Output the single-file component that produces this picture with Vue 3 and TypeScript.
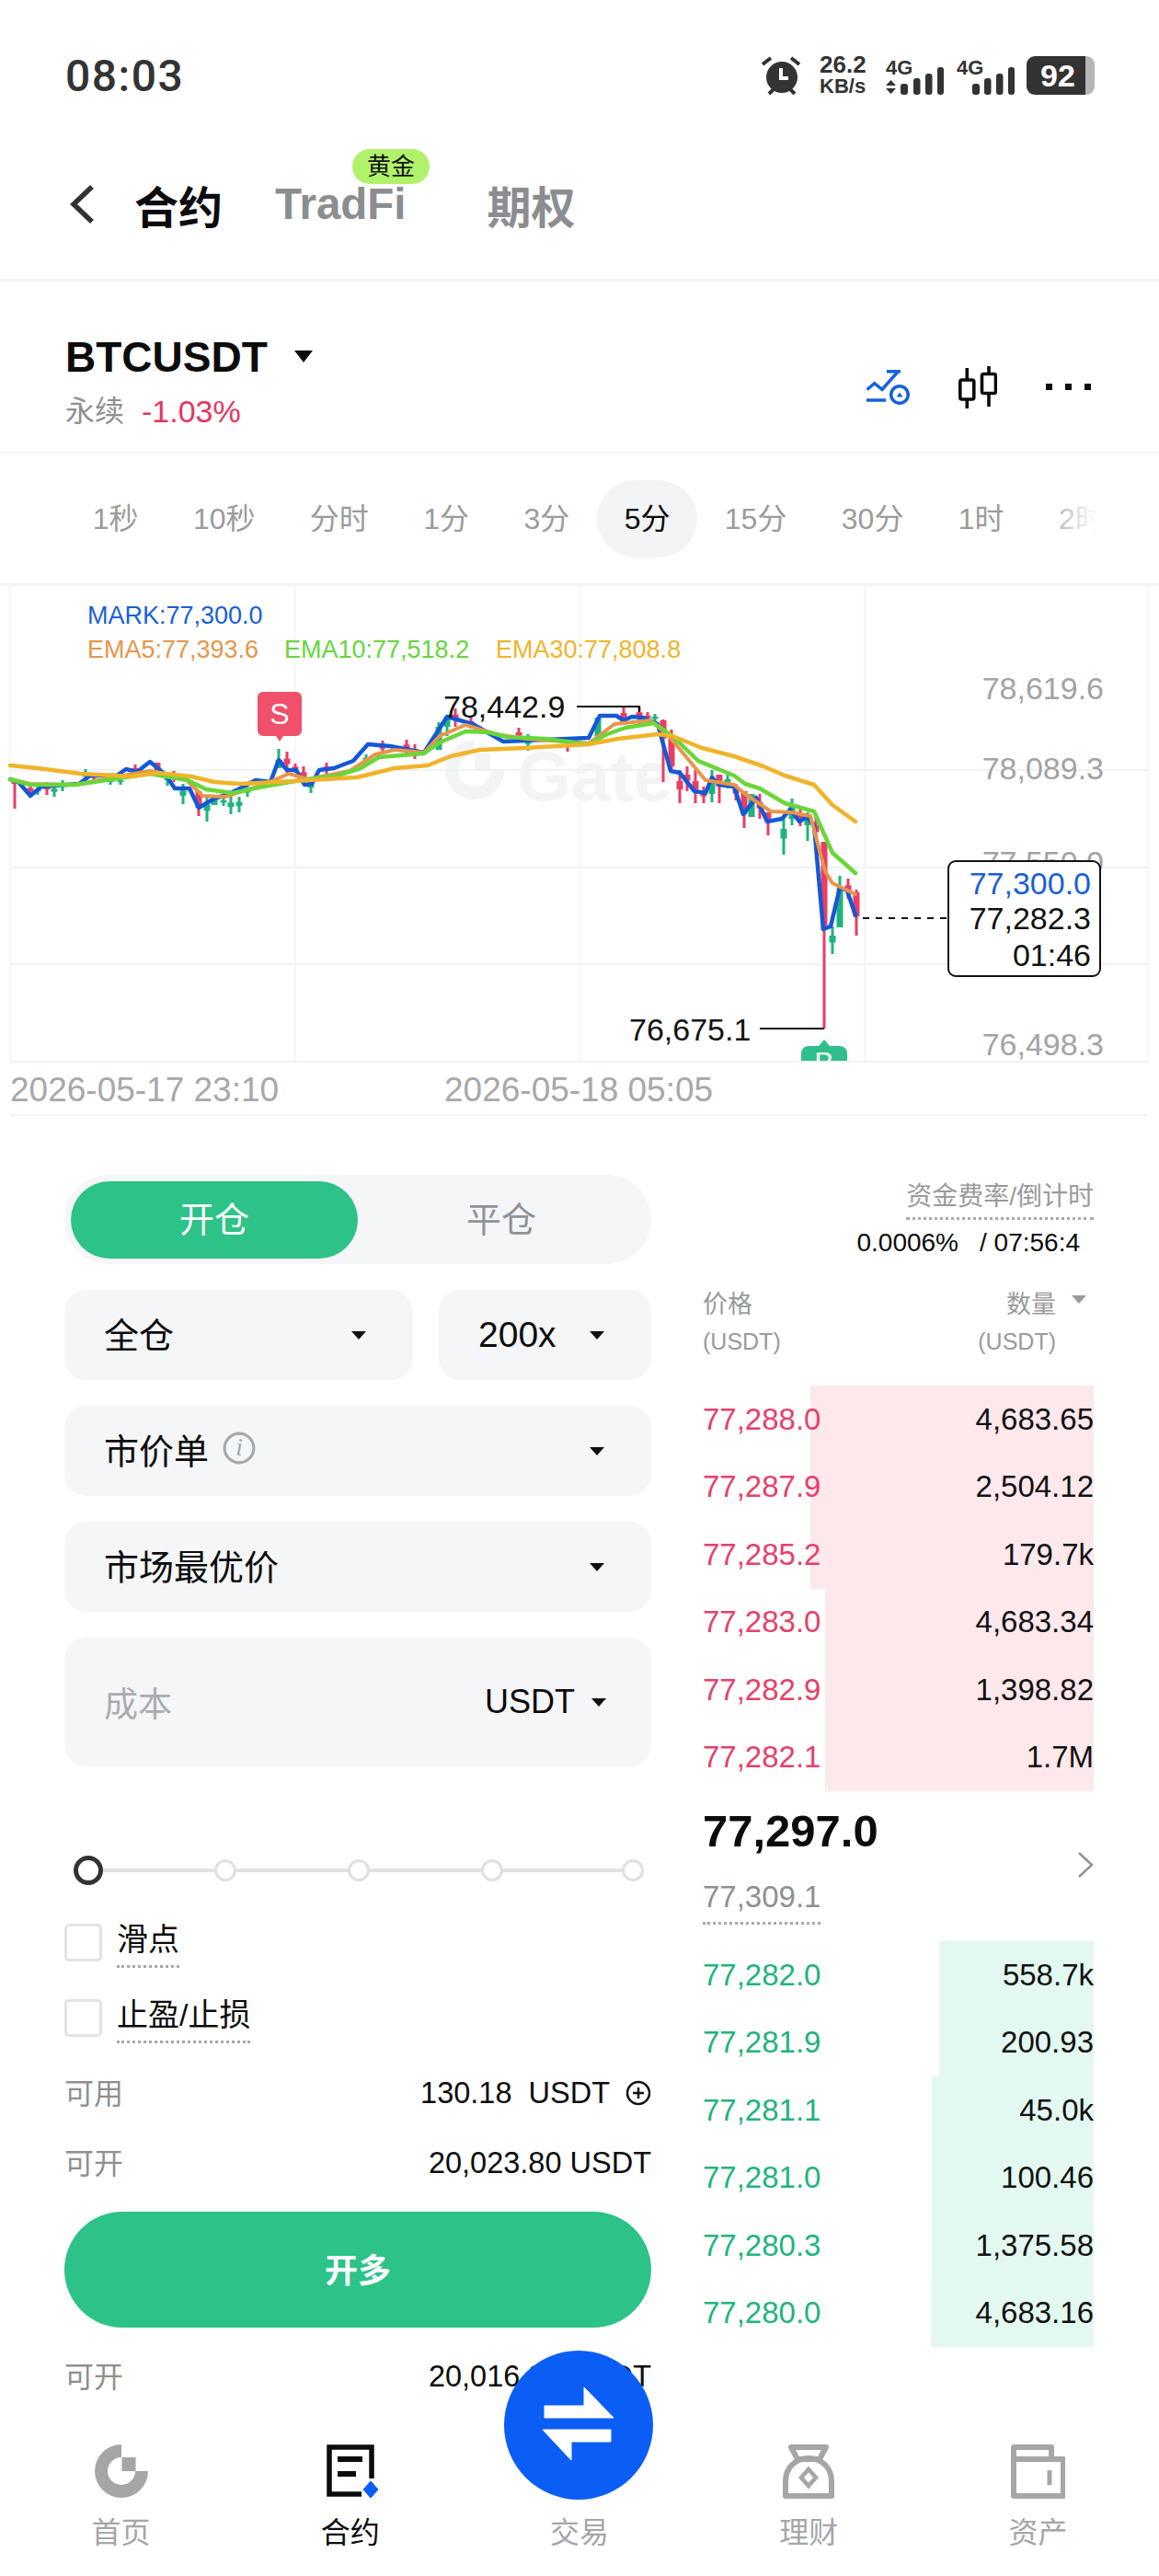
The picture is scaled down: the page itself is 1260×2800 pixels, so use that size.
<script setup lang="ts">
type Candle = [number, number, number, 'r' | 'g', number?, number?]

const intervals = ['1秒', '10秒', '分时', '1分', '3分', '5分', '15分', '30分', '1时', '2时']

const asks = [
  { price: '77,288.0', qty: '4,683.65', depth: 308 },
  { price: '77,287.9', qty: '2,504.12', depth: 308 },
  { price: '77,285.2', qty: '179.7k', depth: 308 },
  { price: '77,283.0', qty: '4,683.34', depth: 292 },
  { price: '77,282.9', qty: '1,398.82', depth: 292 },
  { price: '77,282.1', qty: '1.7M', depth: 292 },
]
const bids = [
  { price: '77,282.0', qty: '558.7k', depth: 168 },
  { price: '77,281.9', qty: '200.93', depth: 168 },
  { price: '77,281.1', qty: '45.0k', depth: 176 },
  { price: '77,281.0', qty: '100.46', depth: 176 },
  { price: '77,280.3', qty: '1,375.58', depth: 176 },
  { price: '77,280.0', qty: '4,683.16', depth: 177 },
]

const candles: Candle[] = [
  [16, 848, 879, 'r', 848, 852], [33, 852, 866, 'r'], [41, 855, 864, 'g'], [51, 850, 864, 'r'], [59, 853, 866, 'g'],
  [68, 848, 860, 'g'], [93, 836, 850, 'g'], [102, 842, 848, 'r'], [120, 846, 853, 'g'], [131, 846, 853, 'g'],
  [147, 831, 843, 'r'], [171, 829, 844, 'r', 829, 842], [182, 840, 854, 'g'], [189, 838, 850, 'r'], [199, 852, 874, 'g'],
  [216, 860, 887, 'r', 860, 878], [225, 865, 893, 'g'], [233, 866, 875, 'g', 866, 875], [243, 867, 876, 'g'],
  [251, 866, 885, 'g'], [260, 866, 883, 'g'], [269, 855, 866, 'g'], [303, 814, 835, 'g', 826, 835], [312, 817, 840, 'r'],
  [321, 830, 840, 'r'], [330, 833, 852, 'r'], [338, 848, 862, 'g'], [355, 829, 842, 'r'], [398, 820, 832, 'g'],
  [416, 805, 820, 'r'], [442, 804, 820, 'r'], [451, 809, 825, 'r'], [477, 785, 815, 'g', 790, 815], [486, 780, 800, 'g', 780, 790],
  [495, 770, 790, 'r'], [512, 780, 792, 'r'], [564, 791, 806, 'r'], [574, 798, 816, 'g'], [617, 805, 817, 'r'],
  [650, 780, 800, 'g', 780, 800], [678, 768, 785, 'r', 775, 785], [695, 768, 787, 'r'], [704, 774, 785, 'r'], [712, 776, 785, 'g'],
  [721, 782, 850, 'r', 783, 803], [730, 793, 840, 'r', 803, 833], [739, 837, 873, 'r'], [747, 833, 860, 'r'], [756, 837, 873, 'r'],
  [765, 855, 873, 'r'], [774, 837, 872, 'g', 847, 863], [782, 842, 873, 'r', 842, 855], [791, 842, 857, 'g'], [800, 852, 870, 'r'],
  [809, 860, 900, 'r', 860, 885], [817, 863, 888, 'g', 863, 888], [826, 863, 890, 'r'], [835, 883, 908, 'r', 883, 893],
  [852, 887, 929, 'g'], [861, 868, 897, 'g', 876, 890], [870, 880, 898, 'r'], [878, 883, 914, 'g', 885, 897], [887, 887, 917, 'r'],
  [896, 915, 1118, 'r', 915, 1010], [905, 1007, 1037, 'g'], [913, 952, 1008, 'g', 965, 1008], [922, 955, 977, 'r'],
  [931, 967, 1017, 'r', 970, 996],
]

const toPoints = (pts: number[][]) => pts.map((p) => p.join(',')).join(' ')

const emaSlow = toPoints([
  [11, 832], [41, 835], [88, 841], [143, 844], [171, 840], [208, 844], [233, 850], [261, 852], [302, 850], [335, 848],
  [388, 845], [429, 835], [465, 832], [490, 822], [522, 815], [571, 813], [640, 809], [672, 803], [715, 798], [731, 800],
  [763, 813], [798, 822], [830, 833], [853, 843], [885, 853], [905, 875], [930, 893],
])
const emaMid = toPoints([
  [11, 847], [33, 853], [82, 853], [122, 847], [163, 841], [204, 848], [224, 858], [253, 862], [286, 855], [327, 848],
  [367, 843], [392, 835], [412, 823], [461, 819], [478, 807], [506, 795], [531, 796], [551, 801], [592, 803], [640, 809],
  [660, 798], [680, 791], [711, 786], [731, 800], [759, 827], [798, 843], [810, 852], [826, 857], [853, 873], [885, 882],
  [893, 900], [905, 927], [930, 949],
])
const emaFast = toPoints([
  [11, 847], [33, 852], [82, 853], [122, 845], [163, 838], [200, 845], [220, 865], [245, 866], [286, 853], [314, 841],
  [335, 847], [380, 838], [408, 820], [429, 815], [461, 818], [478, 800], [506, 788], [539, 798], [571, 803], [640, 808],
  [668, 787], [707, 783], [727, 800], [767, 848], [798, 853], [810, 863], [838, 882], [861, 883], [881, 887], [897, 947],
  [905, 960], [930, 972],
])
const markLine = toPoints([
  [11, 847], [20, 850], [33, 865], [45, 855], [86, 852], [98, 843], [127, 843], [137, 836], [149, 839], [163, 828],
  [180, 842], [190, 857], [206, 857], [216, 878], [233, 868], [249, 863], [278, 848], [294, 850], [303, 826], [312, 837],
  [322, 837], [331, 853], [339, 852], [347, 837], [363, 835], [384, 827], [400, 809], [424, 811], [461, 818], [486, 779],
  [514, 787], [547, 806], [571, 805], [640, 802], [652, 778], [670, 778], [678, 783], [687, 779], [699, 780], [715, 787],
  [729, 838], [739, 840], [755, 860], [767, 862], [774, 845], [782, 853], [798, 855], [808, 885], [822, 867], [834, 893],
  [850, 890], [859, 880], [869, 893], [877, 888], [885, 897], [895, 1010], [903, 1007], [913, 965], [921, 968], [930, 995],
])

const gridX = [11, 321, 630, 940, 1248]
const gridY = [837, 943, 1048, 1154]
const axisLabels = [
  { y: 748, text: '78,619.6' },
  { y: 835, text: '78,089.3' },
  { y: 937, text: '77,550.0' },
  { y: 1135, text: '76,498.3' },
]

const candleColor = (c: Candle) => (c[3] === 'r' ? '#ea3d65' : '#1fb47e')
</script>

<template>
  <div class="page">
    <div class="status">
      <span class="clock">08:03</span>
      <div class="status-icons">
        <svg class="alarm" width="42" height="42" viewBox="0 0 42 42">
          <circle cx="22" cy="23" r="17" fill="#333" />
          <path d="M21 13v11h8" fill="none" stroke="#fff" stroke-width="4" />
          <path d="M1 9l9-7M41 9l-9-7M8 41l5-5M36 41l-5-5" fill="none" stroke="#333" stroke-width="4" />
        </svg>
        <div class="speed">
          <span class="speed-num">26.2</span>
          <span class="speed-unit">KB/s</span>
        </div>
        <svg class="sim" width="63" height="44" viewBox="0 0 63 44">
          <text x="0" y="21" class="sim-text">4G</text>
          <path d="M0 33l5.500-6 5.500 6zM0 36l5.500 6 5.500-6z" fill="#333" />
          <rect x="16" y="31" width="8" height="12" rx="3" fill="#333" />
          <rect x="30" y="25" width="7.500" height="18" rx="3" fill="#333" />
          <rect x="43" y="20" width="7.500" height="23" rx="3" fill="#333" />
          <rect x="56" y="13" width="7" height="30" rx="3" fill="#333" />
        </svg>
        <svg class="sim" width="63" height="44" viewBox="0 0 63 44">
          <text x="0" y="21" class="sim-text">4G</text>
          <rect x="17" y="31" width="8" height="12" rx="3" fill="#333" />
          <rect x="30" y="25" width="7.500" height="18" rx="3" fill="#333" />
          <rect x="43" y="20" width="7.500" height="23" rx="3" fill="#333" />
          <rect x="56" y="13" width="7" height="30" rx="3" fill="#333" />
        </svg>
        <div class="battery"><span class="battery-num">92</span></div>
      </div>
    </div>

    <div class="topnav">
      <svg class="back" width="29" height="44" viewBox="0 0 29 44">
        <path d="M25 3L5 22l20 19" fill="none" stroke="#333" stroke-width="5.500" />
      </svg>
      <span class="nav-item nav-active">合约</span>
      <span class="nav-item nav-tradfi">
        TradFi
        <span class="gold-badge">黄金</span>
      </span>
      <span class="nav-item nav-option">期权</span>
    </div>

    <div class="symbol-bar">
      <div class="symbol-info">
        <div class="symbol-name">
          <span>BTCUSDT</span>
          <i class="symbol-caret"></i>
        </div>
        <div class="symbol-sub">
          <span class="perp">永续</span>
          <span class="change">-1.03%</span>
        </div>
      </div>
      <div class="symbol-tools">
        <svg width="47" height="38" viewBox="0 0 47 38" fill="none" stroke="#1560dc" stroke-width="3.500">
          <path d="M.5 21.500l8.200-6.800L17 21.300 33.700 2.500" />
          <path d="M22 1.800h15" />
          <path d="M0 33h21" />
          <circle cx="36" cy="27" r="9.300" />
          <path d="M32.700 29.500l3.300-5 3.700 5z" fill="#1560dc" stroke="none" />
        </svg>
        <svg width="42" height="46" viewBox="0 0 42 46" fill="none" stroke="#0c0c0c" stroke-width="3.600">
          <rect x="1.800" y="15" width="15" height="21" rx="2" />
          <path d="M9.300 2v13M9.300 36v10" />
          <rect x="25.500" y="8.500" width="15" height="21" rx="2" />
          <path d="M33 0v8.500M33 29.500V44" />
        </svg>
        <div class="more"><i></i><i></i><i></i></div>
      </div>
    </div>

    <div class="intervals">
      <span v-for="item in intervals" :key="item" class="interval" :class="{ 'interval-on': item === '5分' }">{{ item }}</span>
      <div class="interval-fade"></div>
    </div>

    <svg class="chart" width="1260" height="578" viewBox="0 637 1260 578">
      <defs>
        <clipPath id="plotClip"><rect x="0" y="637" width="1260" height="516" /></clipPath>
      </defs>
      <g fill="#f2f4f5">
        <path d="M516 805a32 32 0 1 0 32 32h-14a18 18 0 1 1-18-18zM516 819h17v17h-17z" />
        <text x="562" y="870" class="wm">Gate</text>
      </g>
      <line v-for="x in gridX" :key="x" :x1="x" y1="637" :x2="x" y2="1154" stroke="#f3f4f5" stroke-width="1.500" />
      <line v-for="y in gridY" :key="y" x1="11" :y1="y" x2="1248" :y2="y" stroke="#f1f2f3" stroke-width="2" />
      <line x1="11" y1="1212" x2="1248" y2="1212" stroke="#f1f2f3" stroke-width="2" />

      <text x="95" y="678" class="legend" fill="#1a5fd8">MARK:77,300.0</text>
      <text x="95" y="715" class="legend" fill="#e8954a">EMA5:77,393.6</text>
      <text x="309" y="715" class="legend" fill="#66d63c">EMA10:77,518.2</text>
      <text x="539" y="715" class="legend" fill="#f0b429">EMA30:77,808.8</text>

      <text v-for="a in axisLabels" :key="a.text" x="1200" :y="a.y + 12" class="axis" text-anchor="end">{{ a.text }}</text>

      <g v-for="c in candles" :key="c[0]" :fill="candleColor(c)">
        <rect :x="c[0] - 1.500" :y="c[1]" width="3" :height="c[2] - c[1]" />
        <rect
          :x="c[0] - 3.500"
          :y="c[4] ?? (c[1] * 2 + c[2]) / 3"
          width="7"
          :height="c[5] !== undefined && c[4] !== undefined ? c[5] - c[4] : (c[2] - c[1]) / 4"
        />
      </g>

      <polyline :points="markLine" class="ma" stroke="#1558d6" stroke-width="4.500" />
      <polyline :points="emaFast" class="ma" stroke="#e8954a" stroke-width="4" />
      <polyline :points="emaMid" class="ma" stroke="#6ad63a" stroke-width="4.500" />
      <polyline :points="emaSlow" class="ma" stroke="#f0b429" stroke-width="4.500" />

      <text x="482" y="780" class="extreme">78,442.9</text>
      <path d="M627 768h68v6" fill="none" stroke="#111" stroke-width="2" />
      <text x="684" y="1131" class="extreme">76,675.1</text>
      <path d="M826 1118h70" fill="none" stroke="#111" stroke-width="2" />

      <path d="M280 758a6 6 0 0 1 6-6h36a6 6 0 0 1 6 6v36a6 6 0 0 1-6 6h-14l-4 6-4-6h-14a6 6 0 0 1-6-6z" fill="#f0506a" />
      <text x="304" y="787" class="marker-text" text-anchor="middle">S</text>
      <g clip-path="url(#plotClip)">
        <path d="M871 1145a8 8 0 0 1 8-8h11l6-7 6 7h11a8 8 0 0 1 8 8v30h-50z" fill="#2fbf8a" />
        <text x="896" y="1166" class="marker-text" text-anchor="middle">B</text>
      </g>

      <path d="M938 998h92" stroke="#111" stroke-width="2" stroke-dasharray="7 7" />
      <rect x="1031" y="936" width="165" height="125" rx="8" fill="#fff" stroke="#111" stroke-width="2" />
      <text x="1186" y="972" class="box-text" fill="#1a5fd8" text-anchor="end">77,300.0</text>
      <text x="1186" y="1010" class="box-text" fill="#111" text-anchor="end">77,282.3</text>
      <text x="1186" y="1050" class="box-text" fill="#111" text-anchor="end">01:46</text>

      <text x="11" y="1197" class="date">2026-05-17 23:10</text>
      <text x="483" y="1197" class="date">2026-05-18 05:05</text>
    </svg>

    <div class="trade">
      <div class="form">
        <div class="toggle">
          <div class="toggle-on">开仓</div>
          <div class="toggle-off">平仓</div>
        </div>
        <div class="field-row">
          <div class="field field-margin"><span class="cjk">全仓</span><i class="caret"></i></div>
          <div class="field field-lev"><span class="lev">200x</span><i class="caret"></i></div>
        </div>
        <div class="field">
          <span class="with-icon cjk">
            市价单
            <svg width="36" height="36" viewBox="0 0 34 34">
              <circle cx="17" cy="17" r="15" fill="none" stroke="#a6a9ad" stroke-width="3" />
              <text x="17" y="25" class="info-i" text-anchor="middle">i</text>
            </svg>
          </span>
          <i class="caret"></i>
        </div>
        <div class="field"><span class="cjk">市场最优价</span><i class="caret"></i></div>
        <div class="field field-cost">
          <span class="placeholder">成本</span>
          <span class="cost-unit">USDT<i class="caret"></i></span>
        </div>

        <div class="slider">
          <i class="thumb"></i>
          <i class="stop"></i>
          <i class="stop"></i>
          <i class="stop"></i>
          <i class="stop stop-end"></i>
        </div>

        <div class="check check-first">
          <i class="box"></i>
          <span class="dotted">滑点</span>
        </div>
        <div class="check check-second">
          <i class="box"></i>
          <span class="dotted">止盈/止损</span>
        </div>

        <div class="info-row info-avail">
          <span class="info-label">可用</span>
          <span class="info-value">
            130.18&nbsp; USDT
            <svg width="28" height="28" viewBox="0 0 28 28" fill="none" stroke="#111" stroke-width="2.500">
              <circle cx="14" cy="14" r="12" />
              <path d="M14 8v12M8 14h12" />
            </svg>
          </span>
        </div>
        <div class="info-row info-open">
          <span class="info-label">可开</span>
          <span class="info-value">20,023.80 USDT</span>
        </div>
        <button class="long-btn">开多</button>
        <div class="info-row info-after">
          <span class="info-label">可开</span>
          <span class="info-value">20,016.80 USDT</span>
        </div>
      </div>

      <div class="book">
        <div class="funding">
          <span class="funding-title">资金费率/倒计时</span>
          <div class="funding-val"><span>0.0006%</span><span>/ 07:56:4</span></div>
        </div>
        <div class="book-head">
          <div>
            <div class="head-main">价格</div>
            <div class="head-unit">(USDT)</div>
          </div>
          <div class="head-right">
            <div class="head-main">数量<i class="head-caret"></i></div>
            <div class="head-unit">(USDT)</div>
          </div>
        </div>

        <div class="rows rows-ask">
          <div v-for="row in asks" :key="row.price" class="row">
            <div class="depth depth-ask" :style="{ width: row.depth + 'px' }"></div>
            <span class="ask-price">{{ row.price }}</span>
            <span class="qty">{{ row.qty }}</span>
          </div>
        </div>

        <div class="mid">
          <div class="mid-price">77,297.0</div>
          <div class="mid-sub">
            <span class="mark-price">77,309.1</span>
            <svg width="18" height="30" viewBox="0 0 18 30">
              <path d="M2 2l14 13L2 28" fill="none" stroke="#8f9398" stroke-width="2.500" />
            </svg>
          </div>
        </div>

        <div class="rows rows-bid">
          <div v-for="row in bids" :key="row.price" class="row">
            <div class="depth depth-bid" :style="{ width: row.depth + 'px' }"></div>
            <span class="bid-price">{{ row.price }}</span>
            <span class="qty">{{ row.qty }}</span>
          </div>
        </div>
      </div>
    </div>

    <nav class="tabbar">
      <div class="tab">
        <svg width="60" height="60" viewBox="0 0 60 60" fill="#a4a6a8">
          <path d="M30 1A29 29 0 1 0 59 30H45A15 15 0 1 1 30 15z" />
          <rect x="30.500" y="15" width="15" height="15" />
        </svg>
        <span>首页</span>
      </div>
      <div class="tab tab-on">
        <svg width="60" height="60" viewBox="0 0 60 60">
          <path d="M42 55H7V4h46v34" fill="none" stroke="#0c0c0c" stroke-width="5.500" />
          <path d="M16 17h27M16 33h20" fill="none" stroke="#0c0c0c" stroke-width="6" />
          <path d="M52 41l8 9-8 9-8-9z" fill="#0a5ef5" stroke="#0a5ef5" stroke-width="1" stroke-linejoin="round" />
        </svg>
        <span>合约</span>
      </div>
      <div class="tab">
        <div class="tab-space"></div>
        <span>交易</span>
      </div>
      <div class="tab">
        <svg width="60" height="60" viewBox="0 0 60 60" fill="none" stroke="#a4a6a8" stroke-width="6">
          <path d="M11 4h38l-7 13H18z" stroke-linejoin="round" />
          <path d="M5 57V41C5 26 16 16 30 16s25 10 25 25v16z" stroke-linejoin="round" />
          <path d="M30 28l8 9-8 9-8-9z" stroke-width="4.500" />
        </svg>
        <span>理财</span>
      </div>
      <div class="tab">
        <svg width="60" height="60" viewBox="0 0 60 60" fill="none" stroke="#a4a6a8" stroke-width="6">
          <path d="M4 57V4h41v13h13v40z" stroke-linejoin="round" />
          <path d="M4 17h41" />
          <path d="M43 29v16" stroke-width="5" />
        </svg>
        <span>资产</span>
      </div>
    </nav>

    <div class="fab">
      <svg width="80" height="84" viewBox="0 0 80 84" fill="#fff">
        <path d="M3 21h43V1l32 33H3z" stroke="#fff" stroke-linejoin="round" />
        <path d="M1 47h74v13H32v20z" stroke="#fff" stroke-linejoin="round" />
      </svg>
    </div>
  </div>
</template>

<style>
html,
body {
  margin: 0;
  background: #fff;
}
</style>

<style scoped>
.page {
  position: relative;
  width: 1260px;
  height: 2800px;
  overflow: hidden;
  background: #fff;
  color: #0c0c0c;
  font-family: "Liberation Sans", "Noto Sans CJK SC", sans-serif;
}

/* status bar */
.status {
  height: 136px;
  padding: 14px 70px 0 71px;
  box-sizing: content-box;
  display: flex;
  align-items: center;
  justify-content: space-between;
}
.clock {
  font-family: Roboto, sans-serif;
  font-weight: 500;
  font-size: 48px;
  letter-spacing: 1.500px;
  color: #333;
}
.status-icons {
  display: flex;
  align-items: center;
}
.speed {
  margin-left: 21px;
  width: 52px;
  display: flex;
  flex-direction: column;
  font-weight: 700;
  color: #333;
  line-height: 24px;
}
.speed-num {
  font-size: 26px;
}
.speed-unit {
  font-size: 22px;
}
.sim {
  margin-left: 20px;
}
.sim + .sim {
  margin-left: 14px;
}
.sim-text {
  font: 700 22px "Liberation Sans", sans-serif;
  fill: #333;
}
.battery {
  margin-left: 13px;
  width: 74px;
  height: 42px;
  border-radius: 9px;
  background: linear-gradient(90deg, #333 0 64px, #b5b5b5 64px);
  display: flex;
  align-items: center;
  padding-left: 15px;
  box-sizing: border-box;
}
.battery-num {
  color: #fff;
  font-size: 34px;
  font-weight: 700;
}

/* top nav */
.topnav {
  height: 143px;
  padding: 0 0 10px 75px;
  display: flex;
  align-items: center;
  border-bottom: 3px solid #f3f4f5;
}
.back {
  margin-right: 42px;
}
.nav-item {
  font-size: 48px;
  font-weight: 700;
  color: #8b8d90;
}
.nav-active {
  color: #0c0c0c;
}
.nav-tradfi {
  position: relative;
  margin-left: 57px;
  font-size: 47.500px;
}
.nav-option {
  margin-left: 88px;
}
.gold-badge {
  position: absolute;
  left: 84px;
  top: -32px;
  width: 84px;
  height: 38px;
  border-radius: 19px;
  background: #b0f26a;
  color: #111;
  font-size: 26px;
  font-weight: 400;
  line-height: 38px;
  text-align: center;
}

/* symbol */
.symbol-bar {
  height: 185px;
  padding: 0 74px 0 71px;
  display: flex;
  align-items: center;
  justify-content: space-between;
  border-bottom: 2px solid #f3f4f5;
}
.symbol-info {
  padding-top: 30px;
}
.symbol-name {
  display: flex;
  align-items: center;
  font-size: 46px;
  font-weight: 700;
  line-height: 54px;
}
.symbol-caret {
  margin-left: 29px;
  width: 0;
  height: 0;
  border-left: 10px solid transparent;
  border-right: 10px solid transparent;
  border-top: 13px solid #0c0c0c;
}
.symbol-sub {
  margin-top: 12px;
  display: flex;
  align-items: center;
  gap: 19px;
  line-height: 40px;
}
.perp {
  font-size: 32px;
  color: #8f8f8f;
}
.change {
  font-size: 34px;
  color: #e8345f;
}
.symbol-tools {
  margin-top: 44px;
  display: flex;
  align-items: center;
}
.symbol-tools svg + svg {
  margin-left: 53px;
}
.more {
  margin-left: 53px;
  display: flex;
  gap: 14px;
}
.more i {
  width: 7px;
  height: 7px;
  background: #0c0c0c;
}

/* intervals */
.intervals {
  position: relative;
  height: 141px;
  padding-left: 71px;
  display: flex;
  align-items: center;
  overflow: hidden;
  border-bottom: 3px solid #f3f4f5;
  box-sizing: content-box;
  white-space: nowrap;
}
.interval {
  flex: none;
  height: 84px;
  line-height: 84px;
  padding: 0 29.700px;
  border-radius: 42px;
  font-size: 32px;
  color: #9b9b9b;
}
.interval-on {
  background: #f3f4f5;
  color: #0c0c0c;
}
.interval-fade {
  position: absolute;
  left: 1130px;
  top: 0;
  width: 130px;
  height: 100%;
  background: linear-gradient(90deg, rgba(255, 255, 255, 0) 0, #fff 48%);
}

/* chart */
.chart {
  display: block;
}
.wm {
  font: 700 76px "Liberation Sans", sans-serif;
}
.legend {
  font: 27px "Liberation Sans", sans-serif;
}
.axis {
  font: 34px "Liberation Sans", sans-serif;
  fill: #a3a3a3;
}
.ma {
  fill: none;
  stroke-linejoin: round;
  stroke-linecap: round;
}
.extreme,
.box-text {
  font: 34px "Liberation Sans", sans-serif;
}
.extreme {
  fill: #111;
}
.marker-text {
  font: 32px "Liberation Sans", sans-serif;
  fill: #fff;
}
.date {
  font: 37px "Liberation Sans", sans-serif;
  fill: #a8a8a8;
}

/* trade area */
.trade {
  display: flex;
  padding-left: 70px;
}
.form {
  width: 638px;
  padding-top: 62px;
}
.toggle {
  height: 97px;
  border-radius: 49px;
  background: #f4f6f7;
  display: flex;
  align-items: center;
  padding: 0 7px;
  box-sizing: border-box;
}
.toggle-on,
.toggle-off {
  height: 84px;
  line-height: 84px;
  text-align: center;
  font-size: 38px;
}
.toggle-on {
  width: 312px;
  border-radius: 42px;
  background: #2dc287;
  color: #fff;
}
.toggle-off {
  flex: 1;
  color: #8f9398;
}
.field-row {
  display: flex;
  gap: 28px;
}
.field {
  height: 98px;
  margin-top: 28px;
  border-radius: 24px;
  background: #f4f6f7;
  display: flex;
  align-items: center;
  justify-content: space-between;
  padding: 0 51px 0 43px;
  font-size: 38px;
}
.cjk {
  margin-bottom: 6px;
}
.field-margin {
  width: 379px;
  box-sizing: border-box;
}
.field-lev {
  flex: 1;
}
.lev {
  font-size: 39px;
}
.with-icon {
  display: flex;
  align-items: center;
  gap: 15px;
}
.info-i {
  font: italic 26px "Liberation Serif", serif;
  fill: #a6a9ad;
}
.field-cost {
  height: 140px;
  padding-right: 49px;
}
.placeholder {
  color: #a9adb2;
  font-size: 37px;
}
.cost-unit {
  display: flex;
  align-items: center;
  gap: 18px;
  font-size: 36px;
}
.caret {
  display: block;
  flex: none;
  width: 0;
  height: 0;
  border-left: 8px solid transparent;
  border-right: 8px solid transparent;
  border-top: 9px solid #111;
}
.slider {
  margin: 97px 8px 0 10px;
  height: 32px;
  display: flex;
  align-items: center;
  gap: 121px;
  background: linear-gradient(#e0e2e4, #e0e2e4) center / 100% 4px no-repeat;
}
.thumb {
  flex: none;
  width: 32px;
  height: 32px;
  box-sizing: border-box;
  border: 5px solid #333;
  border-radius: 50%;
  background: #fff;
}
.stop {
  flex: none;
  width: 24px;
  height: 24px;
  box-sizing: border-box;
  border: 3px solid #dfe1e3;
  border-radius: 50%;
  background: #fff;
}
.stop-end {
  margin-left: auto;
}
.check {
  display: flex;
  align-items: flex-start;
  gap: 16px;
  font-size: 34px;
}
.check-first {
  margin-top: 42px;
}
.check-second {
  margin-top: 34px;
}
.box {
  flex: none;
  width: 41px;
  height: 41px;
  box-sizing: border-box;
  border: 3px solid #e2e4e6;
  border-radius: 5px;
}
.dotted {
  line-height: 34px;
  padding-bottom: 11px;
  border-bottom: 3px dotted #a8a8a8;
}
.info-row {
  display: flex;
  align-items: center;
  justify-content: space-between;
  height: 40px;
  font-size: 32.500px;
}
.info-avail {
  margin-top: 34px;
}
.info-open {
  margin-top: 36px;
}
.info-after {
  margin-top: 33px;
}
.info-label {
  color: #8f8f8f;
  font-size: 32px;
  margin-bottom: 4px;
}
.info-value {
  display: flex;
  align-items: center;
  gap: 17px;
}
.long-btn {
  display: block;
  width: 100%;
  height: 126px;
  margin-top: 33px;
  padding: 0 0 4px;
  border: 0;
  border-radius: 63px;
  background: #2dc287;
  color: #fff;
  font: 700 36px "Liberation Sans", "Noto Sans CJK SC", sans-serif;
}

/* order book */
.book {
  width: 425px;
  margin-left: 56px;
  padding-top: 68px;
}
.funding {
  display: flex;
  flex-direction: column;
  align-items: flex-end;
}
.funding-title {
  font-size: 28px;
  line-height: 36px;
  color: #9a9a9a;
  padding-bottom: 4px;
  border-bottom: 3px dotted #a8a8a8;
}
.funding-val {
  display: flex;
  gap: 23px;
  margin: 5px 15px 0 0;
  line-height: 40px;
  font-size: 28px;
}
.book-head {
  margin-top: 29px;
  display: flex;
  justify-content: space-between;
  padding-right: 41px;
  color: #9a9a9a;
}
.head-right {
  text-align: right;
}
.head-main {
  font-size: 27px;
  line-height: 36px;
  position: relative;
}
.head-caret {
  position: absolute;
  left: 100%;
  top: 8px;
  margin-left: 17px;
  width: 0;
  height: 0;
  border-left: 8px solid transparent;
  border-right: 8px solid transparent;
  border-top: 9px solid #9a9a9a;
}
.head-unit {
  font-size: 25px;
  line-height: 30px;
  margin-top: 7px;
}
.rows-ask {
  margin-top: 33px;
}
.rows-bid {
  margin-top: 18px;
}
.row {
  position: relative;
  height: 73.500px;
  display: flex;
  align-items: center;
  justify-content: space-between;
  font-size: 33px;
}
.row span {
  position: relative;
}
.depth {
  position: absolute;
  right: 0;
  top: 0;
  bottom: 0;
}
.depth-ask {
  background: #fde8ec;
}
.depth-bid {
  background: #e3f8f0;
}
.ask-price {
  color: #e6416a;
}
.bid-price {
  color: #1fb47e;
}
.qty {
  color: #111;
}
.mid {
  padding-top: 15px;
}
.mid-price {
  font-size: 49px;
  font-weight: 700;
  line-height: 56px;
}
.mid-sub {
  display: flex;
  align-items: flex-start;
  justify-content: space-between;
}
.mark-price {
  margin-top: 24px;
  font-size: 33px;
  line-height: 40px;
  color: #8f8f8f;
  padding-bottom: 7px;
  border-bottom: 3px dotted #a8a8a8;
}
.mid-sub svg {
  margin-top: -6px;
}

/* tab bar */
.tabbar {
  position: absolute;
  left: 0;
  right: 0;
  bottom: 0;
  height: 164px;
  padding: 20px 7px 0;
  box-sizing: border-box;
  display: flex;
  background: #fff;
}
.tab {
  flex: 1;
  display: flex;
  flex-direction: column;
  align-items: center;
  font-size: 32px;
  color: #a4a6a8;
}
.tab span {
  margin-top: 17px;
  line-height: 40px;
}
.tab-on {
  color: #0c0c0c;
}
.tab-space {
  height: 60px;
}
.fab {
  position: absolute;
  left: 548px;
  top: 2555px;
  width: 162px;
  height: 162px;
  border-radius: 50%;
  background: #0a5ef5;
  display: flex;
  align-items: center;
  justify-content: center;
}
</style>
